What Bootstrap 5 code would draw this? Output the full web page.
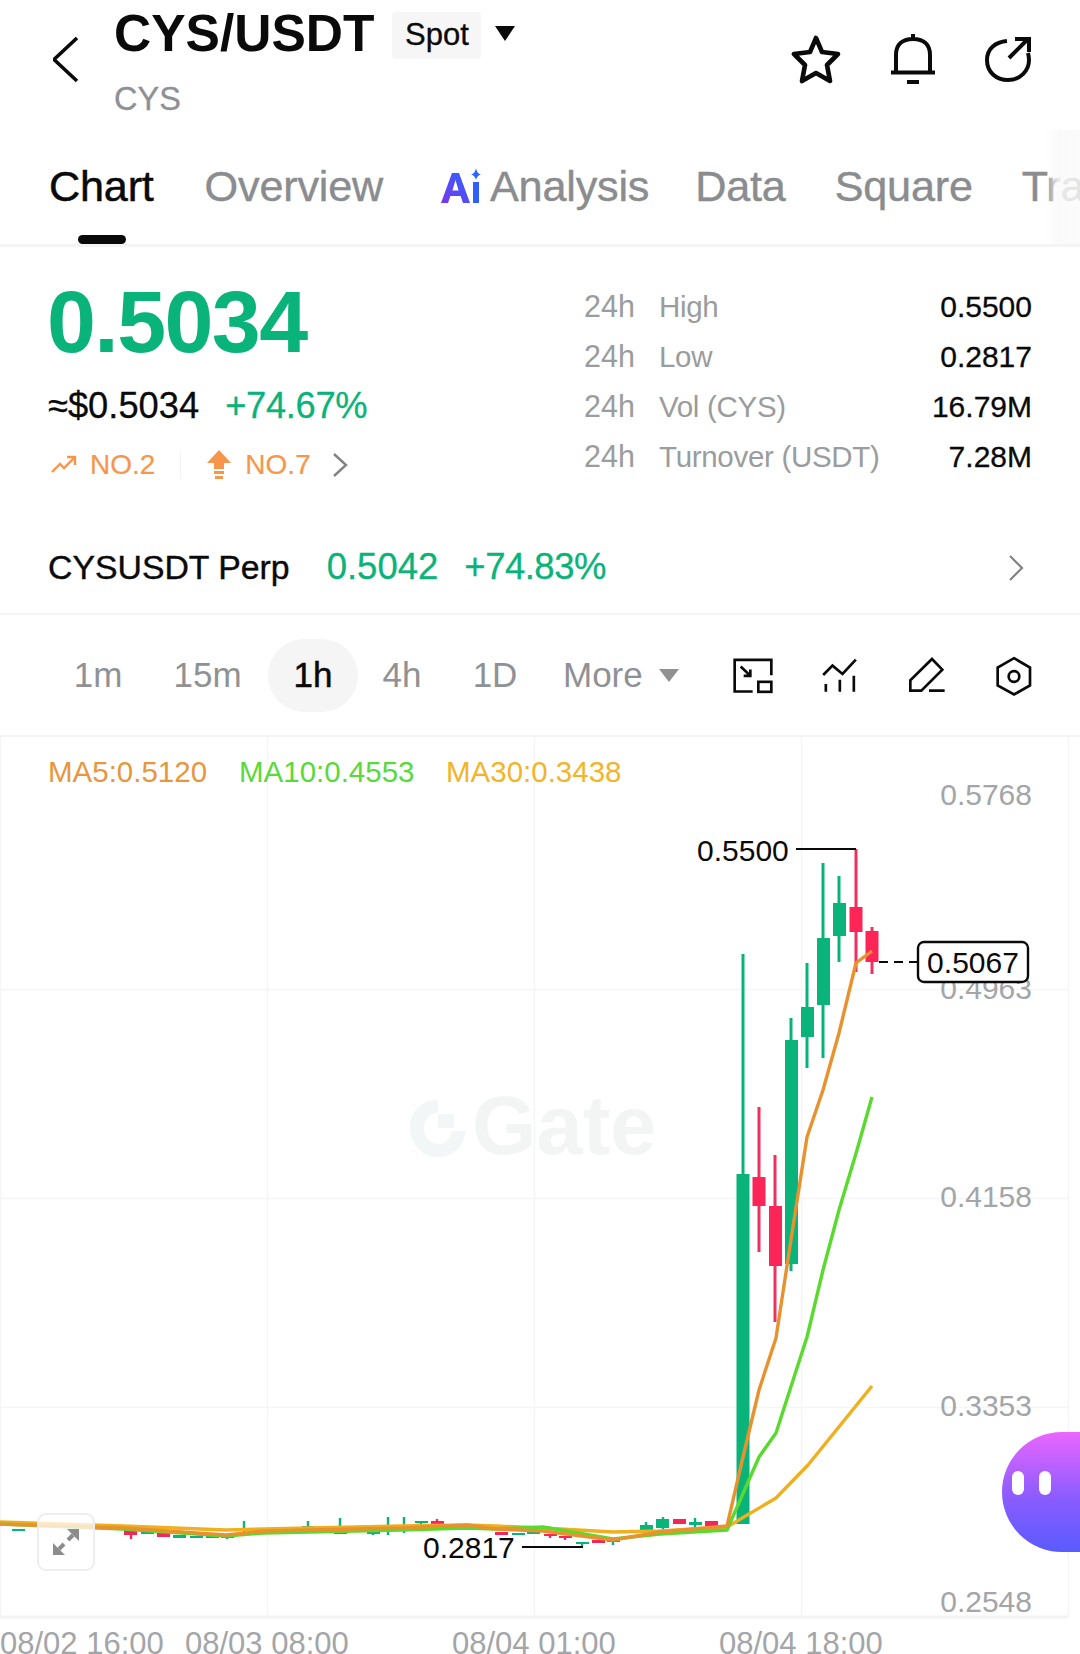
<!DOCTYPE html>
<html lang="en">
<head>
<meta charset="utf-8">
<title>CYS/USDT</title>
<link href="https://cdn.jsdelivr.net/npm/bootstrap@5.3.0/dist/css/bootstrap.min.css" rel="stylesheet">
<script src="https://cdn.jsdelivr.net/npm/bootstrap@5.3.0/dist/js/bootstrap.bundle.min.js"></script>
<style>
html,body{margin:0;background:#fff}
body{font-family:"Liberation Sans",Arial,sans-serif;color:#0a0a0a}
.pg{width:1080px;height:1654px;overflow:hidden;display:flex;flex-direction:column;position:relative}
.hdr{height:130px;padding-left:53px;padding-right:49px}
.back-ic{width:26px;height:46px;margin-top:37px;margin-right:35px;flex:none}
.ttl-wrap{padding-top:7px}
.ttl{font-size:51.5px;line-height:52px;font-weight:700}
.spot{background:#f6f6f6;border-radius:4px;width:89px;height:47px;margin-left:18px;margin-top:5px;font-size:31px;display:flex;align-items:center;justify-content:center;-webkit-text-stroke:.3px #0a0a0a}
.spot-caret{width:0;height:0;border-left:10px solid transparent;border-right:10px solid transparent;border-top:15px solid #0a0a0a;margin-left:14px;margin-top:19px}
.sub{font-size:32.5px;line-height:40px;color:#8e9093;margin-top:20px;-webkit-text-stroke:.3px #8e9093}
.hdr-icons{margin-top:33px;gap:49px}
.tabs{height:117px;border-bottom:3px solid #f4f4f4;padding-left:49px;gap:49px;font-size:43.2px;letter-spacing:-.2px;color:#8a8c8f;-webkit-text-stroke:.4px #8a8c8f;position:relative;white-space:nowrap;overflow:hidden;line-height:50px;padding-top:31px}
.tab-on{color:#0a0a0a;-webkit-text-stroke:.5px #0a0a0a;position:relative}
.tab-ov{margin-left:2px}
.tab-ai{margin-left:9px}
.tab-da{margin-left:-3px}
.tab-bar{position:absolute;left:78px;bottom:0;width:48px;height:9px;border-radius:5px;background:#0a0a0a}
.tab-fade{position:absolute;right:0;top:0;bottom:0;width:34px;background:linear-gradient(to right,rgba(255,255,255,0),rgba(249,249,249,.85) 35%,rgba(250,250,250,.8))}
.ai-ic{width:40px;height:36px;margin-right:9px;margin-top:7px;flex:none}
.ai-tab{display:flex;align-items:flex-start}
.info{height:273px;padding-left:48px;padding-right:48px}
.px{font-size:88px;line-height:85px;font-weight:700;color:#0ab37a;margin-top:32px;margin-left:-1px;letter-spacing:-1.6px}
.usd{font-size:36.3px;line-height:44px;margin-top:20px;white-space:nowrap;-webkit-text-stroke:.3px #0a0a0a}
.chg{color:#0ab37a;margin-left:26px;letter-spacing:-.3px;-webkit-text-stroke:.3px #0ab37a}
.rank{font-size:28px;line-height:36px;color:#f7964b;margin-top:19px;white-space:nowrap;-webkit-text-stroke:.2px #f7964b}
.rk-i1{margin-left:3px;margin-right:13px}
.rank-sep{width:1px;height:28px;background:#f2f2f2;margin:0 26px 0 25px}
.rk-i2{margin-right:14px}
.rk-c{margin-left:21px}
.stats{width:448px;padding-top:35px;font-size:30.5px;color:#9a9c9e}
.stat-row{height:50px}
.stat-k{width:75px}
.stat-l{font-size:29.5px;letter-spacing:-.3px}
.stat-v{color:#0a0a0a;font-size:30px;margin-top:-2px;-webkit-text-stroke:.3px #0a0a0a}
.perp{height:95px;padding-left:48px;padding-right:56px;padding-top:2px;border-bottom:2px solid #f4f4f4;font-size:36.5px;white-space:nowrap}
.perp-n{font-size:33.8px;margin-right:37px;-webkit-text-stroke:.4px #0a0a0a}
.perp-p{color:#0ab37a;margin-right:26px;-webkit-text-stroke:.3px #0ab37a}
.perp-c{color:#0ab37a;letter-spacing:-.5px;-webkit-text-stroke:.3px #0ab37a}
.tfs{height:122px;border-bottom:2px solid #f4f4f4;padding-left:49px;font-size:35px;color:#8f9194;position:relative}
.tf{display:flex;align-items:center;justify-content:center;height:73px}
.w98{width:98px}.w121{width:121px}.w88{width:88px}
.tf-on{width:90px;border-radius:37px;background:#f5f5f5;color:#0a0a0a;-webkit-text-stroke:.5px #0a0a0a}
.tf-more{margin-left:19px}
.tf-caret{width:0;height:0;border-left:10px solid transparent;border-right:10px solid transparent;border-top:13px solid #8f9194;margin-left:16px}
.tf-icons{position:absolute;right:0;top:0;bottom:0;width:0}
.tf-i{position:absolute}
.i1{left:-348px;top:42px}.i2{left:-259px;top:42px}.i3{left:-172px;top:42px}.i4{left:-85px;top:41px}
.chart{flex:1;position:relative;min-height:0}
.chart svg.cv{display:block;position:absolute;left:0;top:0}
.cv text{font-family:"Liberation Sans",Arial,sans-serif}
.expand{position:absolute;left:37px;top:776px;width:58px;height:58px;border:2px solid #eeeeee;border-radius:9px;background:rgba(255,255,255,.75);display:flex;align-items:center;justify-content:center;padding:0}
.bot{position:absolute;left:1002px;top:695px;width:140px;height:120px;border-radius:60px;background:linear-gradient(to bottom,#ea66ff,#8a5cff 55%,#5a5bff)}
.eye{position:absolute;top:39px;width:12px;height:24px;border-radius:6px;background:#fff}
.e1{left:10px}.e2{left:37px}
</style>
</head>
<body>
<div class="pg">
  <header class="hdr d-flex align-items-start justify-content-between">
    <div class="d-flex align-items-start">
      <svg class="back-ic" viewBox="53 37 26 46"><polyline points="77,38 54,59.5 77,81" fill="none" stroke="#0a0a0a" stroke-width="3.6"/></svg>
      <div class="ttl-wrap">
        <div class="d-flex align-items-start">
          <div class="ttl">CYS/USDT</div>
          <div class="spot">Spot</div>
          <div class="spot-caret"></div>
        </div>
        <div class="sub">CYS</div>
      </div>
    </div>
    <div class="hdr-icons d-flex align-items-center">
      <svg width="50" height="50" viewBox="0 0 50 50"><path d="M25 4 L31 18 L47 20 L36 31 L39 47 L25 39 L11 47 L14 31 L3 20 L19 18 Z" fill="none" stroke="#0a0a0a" stroke-width="4.6" stroke-linejoin="round"/></svg>
      <svg width="46" height="52" viewBox="0 0 46 52"><path d="M23 1 V6 M6 38 V22 C6 11 13 6 23 6 C33 6 40 11 40 22 V38 M1 39.5 H45 M17 49 H29" fill="none" stroke="#0a0a0a" stroke-width="4"/></svg>
      <svg width="46" height="46" viewBox="0 0 46 46"><path d="M22 5 C10 6 2 13 2 24 C2 36 11 44 23 44 C35 44 44 35 44 24 C44 21 43.5 19 43 17 M24 22 L43 3 M30 3 H44 V16" fill="none" stroke="#0a0a0a" stroke-width="4"/></svg>
    </div>
  </header>

  <nav class="tabs d-flex align-items-start">
    <div class="tab-on">Chart</div>
    <div class="tab-ov">Overview</div>
    <div class="ai-tab tab-ai">
      <svg class="ai-ic" viewBox="0 0 40 36">
        <defs><linearGradient id="aig" x1="0" y1="1" x2="1" y2="0"><stop offset="0" stop-color="#7b35ec"/><stop offset="1" stop-color="#2a66ff"/></linearGradient></defs>
        <path d="M0 35 L11 5 H18 L29 35 H22 L19.6 28 H9.4 L7 35 Z M11.4 22.5 H17.6 L14.5 12 Z" fill="url(#aig)"/>
        <rect x="32" y="14" width="6" height="21" fill="#2f5fff"/>
        <path d="M35 0 C35.8 4 37 5.6 40 6.5 C37 7.4 35.8 9 35 12 C34.2 9 33 7.4 30 6.5 C33 5.6 34.2 4 35 0 Z" fill="#2a66ff"/>
      </svg>
      <span>Analysis</span>
    </div>
    <div class="tab-da">Data</div>
    <div>Square</div>
    <div>Tra</div>
    <div class="tab-bar"></div>
    <div class="tab-fade"></div>
  </nav>

  <section class="info d-flex justify-content-between">
    <div>
      <div class="px">0.5034</div>
      <div class="usd">≈$0.5034<span class="chg">+74.67%</span></div>
      <div class="rank d-flex align-items-center">
        <svg width="26" height="20" viewBox="0 0 26 20" class="rk-i1"><path d="M1 17 L9 9 L13 13 L23 3 M16 2 H24 V10" fill="none" stroke="#f7964b" stroke-width="2.4"/></svg>
        <span>NO.2</span>
        <span class="rank-sep"></span>
        <svg width="24" height="30" viewBox="0 0 24 30" class="rk-i2"><path d="M12 0 L24 13 H17 V19 H7 V13 H0 Z M7 21 H17 V24 H7 Z M8 26 H16 V29 H8 Z" fill="#f7964b"/></svg>
        <span>NO.7</span>
        <svg width="16" height="24" viewBox="0 0 16 24" class="rk-c"><polyline points="2,1 14,12 2,23" fill="none" stroke="#808285" stroke-width="2.4"/></svg>
      </div>
    </div>
    <div class="stats">
      <div class="stat-row d-flex align-items-center"><span class="stat-k">24h</span><span class="stat-l">High</span><span class="stat-v ms-auto">0.5500</span></div>
      <div class="stat-row d-flex align-items-center"><span class="stat-k">24h</span><span class="stat-l">Low</span><span class="stat-v ms-auto">0.2817</span></div>
      <div class="stat-row d-flex align-items-center"><span class="stat-k">24h</span><span class="stat-l">Vol (CYS)</span><span class="stat-v ms-auto">16.79M</span></div>
      <div class="stat-row d-flex align-items-center"><span class="stat-k">24h</span><span class="stat-l">Turnover (USDT)</span><span class="stat-v ms-auto">7.28M</span></div>
    </div>
  </section>

  <section class="perp d-flex align-items-center">
    <span class="perp-n">CYSUSDT Perp</span>
    <span class="perp-p">0.5042</span>
    <span class="perp-c">+74.83%</span>
    <svg width="16" height="26" viewBox="0 0 16 26" class="ms-auto"><polyline points="2,1 14,13 2,25" fill="none" stroke="#808285" stroke-width="2.2"/></svg>
  </section>

  <section class="tfs d-flex align-items-center">
    <div class="tf w98">1m</div>
    <div class="tf w121">15m</div>
    <div class="tf tf-on">1h</div>
    <div class="tf w88">4h</div>
    <div class="tf w98">1D</div>
    <div class="tf tf-more">More<span class="tf-caret"></span></div>
    <div class="tf-icons">
      <svg class="tf-i i1" width="42" height="37" viewBox="96 54 126 110"><path d="M214 108 V62 H104 V157 H158 M122 82 L151 110 M151 91 V110 H131" fill="none" stroke="#0a0a0a" stroke-width="8"/><rect x="175" y="128" width="39" height="30" fill="none" stroke="#0a0a0a" stroke-width="8"/></svg>
      <svg class="tf-i i2" width="37" height="36" viewBox="364 54 110 108"><path d="M370 108 L398 80 L428 105 L468 62 M378 135 V158 M420 122 V158 M462 110 V158" fill="none" stroke="#0a0a0a" stroke-width="8"/></svg>
      <svg class="tf-i i3" width="38" height="36" viewBox="625 52 114 108"><path d="M697 58 L728 90 L665 153 H632 V122 Z M688 153 H735" fill="none" stroke="#0a0a0a" stroke-width="8"/></svg>
      <svg class="tf-i i4" width="38" height="41" viewBox="885 50 114 122"><path d="M942 56 L990 84 V138 L942 165 L893 138 V84 Z" fill="none" stroke="#0a0a0a" stroke-width="8"/><circle cx="942" cy="111" r="16" fill="none" stroke="#0a0a0a" stroke-width="8"/></svg>
    </div>
  </section>

  <section class="chart">
    <svg class="cv" width="1080" height="917" viewBox="0 737 1080 917">
      <path d="M0.5 737 V1617 M267.5 737 V1617 M534.5 737 V1617 M801.5 737 V1617 M1068.5 737 V1617 M0 989.5 H1068 M0 1198.5 H1068 M0 1407.5 H1068" stroke="#f5f5f5" stroke-width="1.5" fill="none"/>
      <path d="M0 1617 H1068" stroke="#f3f3f3" stroke-width="3"/>
      <path d="M438 1100 C420 1100 410 1113 410 1128 C410 1144 422 1157 438 1157 C453 1157 463 1147 466 1131 H452 C450 1140 445 1144 438 1144 C430 1144 424 1137 424 1128 C424 1120 430 1113 438 1113 Z M438 1114 H454 V1128 H438 Z" fill="#f3f6f6"/>
      <text x="472" y="1154" font-size="83" font-weight="700" fill="#f3f5f5">Gate</text>
      <text x="48" y="782" font-size="29.500" fill="#e8963c">MA5:0.5120</text>
      <text x="239" y="782" font-size="29.500" fill="#5ad93a">MA10:0.4553</text>
      <text x="446" y="782" font-size="29.500" fill="#f3b42a">MA30:0.3438</text>
      <path fill="#0ab37a" stroke="none" d="M12 1529h13v2h-13z M141 1532h13v2h-13z M173 1535h13v3h-13z M190 1536h13v2h-13z M206 1536h13v2h-13z M221 1536h13v2h-13z M302 1526h13v3h-13z M334 1532h13v2h-13z M367 1532h13v2h-13z M398 1525h13v4h-13z M415 1521h13v2h-13z M512 1533h13v2h-13z M527 1532h13v2h-13z M576 1542h13v2h-13z M607 1540h13v2h-13z M640 1525h13v6h-13z M656 1519h13v9h-13z M689 1522h13v3h-13z"/>
      <path stroke="#0ab37a" stroke-width="2.4" fill="none" d="M244 1521V1533 M308 1521V1529 M340 1518V1534 M373 1531V1535 M388 1517V1535 M404 1517V1533 M421 1521V1525 M227 1536V1539 M582 1542V1547 M613 1540V1545 M646 1522V1531 M663 1517V1530 M695 1518V1527"/>
      <path fill="#f5265a" stroke="none" d="M124 1530h13v5h-13z M157 1533h13v4h-13z M287 1527h13v3h-13z M318 1526h13v2h-13z M350 1528h13v4h-13z M431 1521h13v3h-13z M495 1532h13v3h-13z M544 1534h13v2h-13z M559 1536h13v2h-13z M592 1540h13v3h-13z M673 1519h13v5h-13z M705 1521h13v5h-13z M718 1525h12v3h-12z"/>
      <path stroke="#f5265a" stroke-width="2.4" fill="none" d="M131 1530V1539 M437 1519V1525 M550 1534V1538 M565 1536V1540"/>
      <path stroke="#0ab37a" stroke-width="3" fill="none" d="M743 954V1524 M791 1018V1271 M807 963V1068 M823 863V1058 M839 876V962"/>
      <path fill="#0ab37a" d="M736.5 1174h13v350h-13z M785 1040h13v224h-13z M801 1007h13v30h-13z M817 938h13v67h-13z M833 903h13v33h-13z"/>
      <path stroke="#ef3160" stroke-width="3" fill="none" d="M759 1107V1252 M775 1155V1322 M856 849V972 M872 927V974"/>
      <path fill="#fb2558" d="M752.5 1177h13v29h-13z M769 1206h13v60h-13z M849.500 907h13v25h-13z M865.500 931h13v31h-13z"/>
      <path fill="none" stroke-width="3.400" stroke="#f0b01e" stroke-linejoin="round" d="M0 1522 L123 1526 L226 1530 L264 1529 L401 1526 L467 1525 L495 1526 L543 1528 L613 1532 L660 1531 L727 1527 L776 1498 L808 1465 L872 1386"/>
      <path fill="none" stroke-width="3.400" stroke="#5ad92e" stroke-linejoin="round" d="M0 1524 L123 1529 L226 1536 L264 1533 L401 1530 L467 1528 L495 1529 L543 1527 L613 1539 L660 1534 L727 1530 L759 1457 L776 1433 L807 1337 L823 1270 L839 1210 L857 1150 L872 1097"/>
      <path fill="none" stroke-width="3.400" stroke="#e8922f" stroke-linejoin="round" d="M0 1524 L123 1528 L226 1535 L264 1531 L401 1528 L467 1525 L495 1529 L543 1531 L613 1540 L660 1532 L727 1526 L743 1457 L759 1390 L776 1338 L792 1233 L807 1137 L823 1090 L839 1033 L856 963 L872 951"/>
      <text x="697" y="861" font-size="30" fill="#0a0a0a">0.5500</text>
      <path d="M796 849 H856" stroke="#0a0a0a" stroke-width="2"/>
      <text x="423" y="1558" font-size="30" fill="#0a0a0a">0.2817</text>
      <path d="M522 1547 H583" stroke="#0a0a0a" stroke-width="2"/>
      <g font-size="30" fill="#a3a5a8" text-anchor="end">
        <text x="1032" y="805">0.5768</text>
        <text x="1032" y="999">0.4963</text>
        <text x="1032" y="1207">0.4158</text>
        <text x="1032" y="1416">0.3353</text>
        <text x="1032" y="1612">0.2548</text>
      </g>
      <path d="M879 962 H918" stroke="#0a0a0a" stroke-width="2" stroke-dasharray="9 6"/>
      <rect x="918" y="942" width="110" height="40" rx="6" fill="#fff" stroke="#0a0a0a" stroke-width="2.400"/>
      <text x="973" y="973" font-size="30" fill="#0a0a0a" text-anchor="middle">0.5067</text>
      <g font-size="31" fill="#a3a5a8">
        <text x="0" y="1654">08/02 16:00</text>
        <text x="185" y="1654">08/03 08:00</text>
        <text x="452" y="1654">08/04 01:00</text>
        <text x="719" y="1654">08/04 18:00</text>
      </g>
    </svg>
    <button class="expand" type="button" aria-label="Expand">
      <svg width="30" height="30" viewBox="0 0 30 30"><path d="M2 28 V16 L14 28 Z M28 2 V14 L16 2 Z" fill="#8c8c8c"/><path d="M8 22 L13 17 M17 13 L22 8" stroke="#8c8c8c" stroke-width="4"/></svg>
    </button>
    <div class="bot"><span class="eye e1"></span><span class="eye e2"></span></div>
  </section>
</div>
</body>
</html>
